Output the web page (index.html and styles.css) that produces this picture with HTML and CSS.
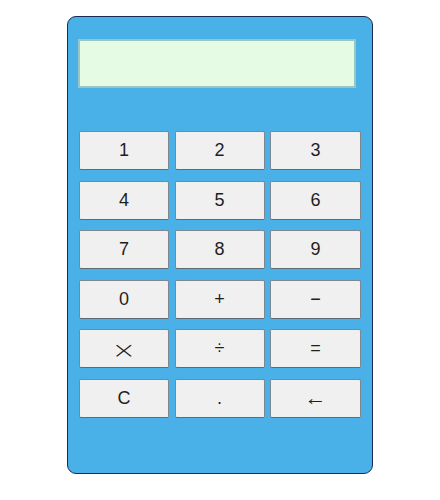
FILE: index.html
```html
<!DOCTYPE html>
<html>
<head>
<meta charset="utf-8">
<link rel="stylesheet" href="styles.css">
</head>
<body>
<div class="calc">
  <div class="display"></div>
  <div class="keys">
    <button class="key">1</button>
    <button class="key">2</button>
    <button class="key">3</button>
    <button class="key">4</button>
    <button class="key">5</button>
    <button class="key">6</button>
    <button class="key">7</button>
    <button class="key">8</button>
    <button class="key">9</button>
    <button class="key">0</button>
    <button class="key">+</button>
    <button class="key">−</button>
    <button class="key"><span class="times">×</span></button>
    <button class="key">÷</button>
    <button class="key">=</button>
    <button class="key">C</button>
    <button class="key">.</button>
    <button class="key key-arrow">←</button>
  </div>
</div>
</body>
</html>
```
FILE: styles.css
```css
html, body {
  margin: 0;
  padding: 0;
  background: #ffffff;
}
body {
  font-family: "Liberation Sans", Arial, sans-serif;
}
.calc {
  box-sizing: border-box;
  width: 306px;
  height: 458px;
  margin: 16px 0 0 67px;
  background: #4ab0e8;
  border: 1px solid #1b2a52;
  border-radius: 9px;
  display: flex;
  flex-direction: column;
}
.display {
  box-sizing: border-box;
  width: 278px;
  height: 49px;
  margin: 22px 0 0 10px;
  background: #e6fbe4;
  border: 2px solid #98c6c4;
}
.keys {
  display: grid;
  grid-template-columns: 90px 90px 91px;
  grid-auto-rows: 39px;
  column-gap: 5.5px;
  row-gap: 10.5px;
  margin: 43px 0 0 11px;
}
.key {
  box-sizing: border-box;
  margin: 0;
  padding: 0;
  background: #f0f0f0;
  border: 1px solid #7c8791;
  border-bottom-color: #5f6a74;
  border-radius: 2px;
  font-family: "Liberation Sans", Arial, sans-serif;
  font-size: 18px;
  color: #1e1e1e;
  display: flex;
  align-items: center;
  justify-content: center;
}
.times {
  display: inline-block;
  font-family: "DejaVu Sans", sans-serif;
  font-weight: 200;
  font-size: 26px;
  line-height: 1;
  transform: scale(1.15, 0.9) translateY(1px);
}
.key-arrow {
  font-family: "Liberation Sans", Arial, sans-serif;
  font-size: 22px;
}
```
